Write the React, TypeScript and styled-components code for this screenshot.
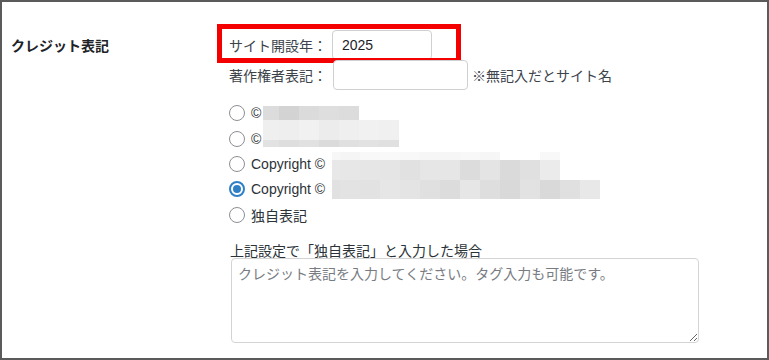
import styled, { createGlobalStyle } from 'styled-components'

const GlobalStyle = createGlobalStyle`
  html, body {
    margin: 0;
    padding: 0;
    background: #fff;
  }
  body {
    font-family: 'Liberation Sans', 'Noto Sans CJK JP', sans-serif;
    font-size: 14px;
    color: #2c3338;
  }
`

type Cell = { w: number; c: string }
type Band = { h: number; cells: Cell[] }

const mosaics: Record<string, Band[]> = {
  short: [
    {
      h: 15,
      cells: [
        { w: 16, c: '#dcdcdc' },
        { w: 20, c: '#d3d3d3' },
        { w: 20, c: '#dbdbdb' },
        { w: 20, c: '#dedede' },
        { w: 20, c: '#dcdcdc' },
      ],
    },
  ],
  medium: [
    {
      h: 20,
      cells: [
        { w: 16, c: '#efefef' },
        { w: 20, c: '#eeeeee' },
        { w: 20, c: '#f1f1f1' },
        { w: 20, c: '#ececec' },
        { w: 20, c: '#efefef' },
        { w: 20, c: '#f1f1f1' },
        { w: 20, c: '#f0f0f0' },
      ],
    },
    {
      h: 7,
      cells: [
        { w: 16, c: '#e2e2e2' },
        { w: 20, c: '#dedede' },
        { w: 20, c: '#e1e1e1' },
        { w: 20, c: '#dbdbdb' },
        { w: 20, c: '#e0e0e0' },
        { w: 20, c: '#e2e2e2' },
        { w: 20, c: '#e0e0e0' },
      ],
    },
  ],
  long: [
    {
      h: 8,
      cells: [
        { w: 8, c: '#f7f7f7' },
        { w: 20, c: '#f5f5f5' },
        { w: 20, c: '#f8f8f8' },
        { w: 20, c: '#f9f9f9' },
        { w: 20, c: '#f8f8f8' },
        { w: 20, c: '#f6f6f6' },
        { w: 20, c: '#f6f6f6' },
        { w: 20, c: '#f8f8f8' },
        { w: 20, c: '#f6f6f6' },
        { w: 20, c: '#ffffff' },
        { w: 20, c: '#ffffff' },
        { w: 20, c: '#f8f8f8' },
      ],
    },
    {
      h: 20,
      cells: [
        { w: 8, c: '#e8e8e8' },
        { w: 20, c: '#e7e7e7' },
        { w: 20, c: '#e6e6e6' },
        { w: 20, c: '#e5e5e5' },
        { w: 20, c: '#e1e1e1' },
        { w: 20, c: '#e6e6e6' },
        { w: 20, c: '#e6e6e6' },
        { w: 20, c: '#dcdcdc' },
        { w: 20, c: '#e4e4e4' },
        { w: 20, c: '#dadada' },
        { w: 20, c: '#e0e0e0' },
        { w: 20, c: '#ebebeb' },
      ],
    },
  ],
  longest: [
    {
      h: 19,
      cells: [
        { w: 8, c: '#e1e1e1' },
        { w: 20, c: '#e3e3e3' },
        { w: 20, c: '#e2e2e2' },
        { w: 20, c: '#e6e6e6' },
        { w: 20, c: '#e4e4e4' },
        { w: 20, c: '#e0e0e0' },
        { w: 20, c: '#dcdcdc' },
        { w: 20, c: '#e6e6e6' },
        { w: 20, c: '#dedede' },
        { w: 20, c: '#d9d9d9' },
        { w: 20, c: '#e2e2e2' },
        { w: 20, c: '#d9d9d9' },
        { w: 20, c: '#e0e0e0' },
        { w: 20, c: '#e8e8e8' },
      ],
    },
  ],
}

const Frame = styled.div`
  box-sizing: border-box;
  width: 769px;
  height: 360px;
  border: 2px solid #5b5b5b;
  display: grid;
  grid-template-columns: 227px 1fr;
  padding-top: 28px;
  overflow: hidden;
`

const Th = styled.div`
  padding-left: 9px;
  font-weight: 700;
  line-height: 30px;
  color: #1d2327;
  font-family: 'Noto Sans CJK JP', sans-serif;
`

const Td = styled.div`
  display: flex;
  flex-direction: column;
`

const FieldRow = styled.div`
  position: relative;
  display: flex;
  align-items: center;
  height: 30px;
`

const FieldLabel = styled.span`
  font-family: 'Noto Sans CJK JP', sans-serif;
  color: #3c434a;
  width: 98px;
`

const TextInput = styled.input<{ $w: number; $gap: number }>`
  box-sizing: border-box;
  width: ${({ $w }) => $w}px;
  height: 30px;
  margin: 0 0 0 ${({ $gap }) => $gap}px;
  padding: 0 9px;
  border: 1px solid #d0d0d0;
  border-radius: 4px;
  font-family: 'Liberation Sans', sans-serif;
  font-size: 14px;
  color: #1d2327;
  background: #fff;
  outline: none;
`

const Note = styled.span`
  margin-left: 4px;
  font-family: 'Noto Sans CJK JP', sans-serif;
  color: #3c434a;
`

const Highlight = styled.div`
  position: absolute;
  left: -12px;
  top: -6px;
  width: 244px;
  height: 39px;
  box-sizing: border-box;
  border: 5px solid #f40000;
  pointer-events: none;
`

const RadioList = styled.div`
  margin-top: 10px;
  display: flex;
  flex-direction: column;
`

const RadioRow = styled.label<{ $h: number }>`
  display: flex;
  align-items: center;
  height: ${({ $h }) => $h}px;
  color: #2c3338;
`

const RadioDot = styled.span<{ $checked?: boolean }>`
  box-sizing: border-box;
  width: 16px;
  height: 16px;
  border-radius: 50%;
  border: ${({ $checked }) => ($checked ? '2px solid #2f7fc6' : '1px solid #8c8f94')};
  margin-right: 6px;
  display: flex;
  align-items: center;
  justify-content: center;
  background: #fff;
  flex-shrink: 0;

  &::after {
    content: '';
    display: ${({ $checked }) => ($checked ? 'block' : 'none')};
    width: 8px;
    height: 8px;
    border-radius: 50%;
    background: #2f7fc6;
  }
`

const RadioText = styled.span<{ $jp?: boolean }>`
  font-family: ${({ $jp }) =>
    $jp ? "'Noto Sans CJK JP', sans-serif" : "'Liberation Sans', 'Noto Sans CJK JP', sans-serif"};
  white-space: pre;
`

const MosaicSvg = styled.svg<{ $gap: number; $shift: number }>`
  display: block;
  flex-shrink: 0;
  margin-left: ${({ $gap }) => $gap}px;
  margin-top: ${({ $shift }) => Math.max(0, $shift * 2)}px;
  margin-bottom: ${({ $shift }) => Math.max(0, -$shift * 2)}px;
`

const Caption = styled.div`
  margin-top: 14px;
  height: 16px;
  line-height: 16px;
  padding-left: 1px;
  font-family: 'Noto Sans CJK JP', sans-serif;
  color: #2c3338;
`

const TextArea = styled.textarea`
  box-sizing: border-box;
  width: 468px;
  height: 85px;
  margin: 0 0 0 2px;
  padding: 5px 6px;
  border: 1px solid #d4d4d4;
  border-radius: 4px;
  font-family: 'Noto Sans CJK JP', sans-serif;
  font-size: 14px;
  line-height: 18px;
  color: #2c3338;
  resize: vertical;
  outline: none;

  &::placeholder {
    color: #787c82;
  }
`

function Mosaic({ kind, gap, shift = 0 }: { kind: string; gap: number; shift?: number }) {
  const bands = mosaics[kind]
  const width = bands[0].cells.reduce((s, c) => s + c.w, 0)
  const height = bands.reduce((s, b) => s + b.h, 0)
  let y = 0
  return (
    <MosaicSvg width={width} height={height} viewBox={`0 0 ${width} ${height}`} $gap={gap} $shift={shift}>
      {bands.map((band, bi) => {
        let x = 0
        const top = y
        y += band.h
        return band.cells.map((cell, ci) => {
          const rect = <rect key={`${bi}-${ci}`} x={x} y={top} width={cell.w} height={band.h} fill={cell.c} />
          x += cell.w
          return rect
        })
      })}
    </MosaicSvg>
  )
}

const options = [
  { text: '©', mosaic: 'short', gap: 2, shift: 0, h: 26 },
  { text: '©', mosaic: 'medium', gap: 2, shift: -5.5, h: 26 },
  { text: 'Copyright ©', mosaic: 'long', gap: 7, shift: 2, h: 24 },
  { text: 'Copyright ©', mosaic: 'longest', gap: 7, shift: 0, h: 26, checked: true },
  { text: '独自表記', h: 26, jp: true },
]

export default function App() {
  return (
    <>
      <GlobalStyle />
      <Frame>
        <Th>クレジット表記</Th>
        <Td>
          <FieldRow>
            <FieldLabel>サイト開設年：</FieldLabel>
            <TextInput $w={100} $gap={5} defaultValue="2025" />
            <Highlight />
          </FieldRow>
          <FieldRow>
            <FieldLabel>著作権者表記：</FieldLabel>
            <TextInput $w={135} $gap={6} />
            <Note>※無記入だとサイト名</Note>
          </FieldRow>
          <RadioList>
            {options.map((o, i) => (
              <RadioRow key={i} $h={o.h}>
                <RadioDot $checked={o.checked} />
                <RadioText $jp={o.jp}>{o.text}</RadioText>
                {o.mosaic && <Mosaic kind={o.mosaic} gap={o.gap ?? 0} shift={o.shift} />}
              </RadioRow>
            ))}
          </RadioList>
          <Caption>上記設定で「独自表記」と入力した場合</Caption>
          <TextArea placeholder="クレジット表記を入力してください。タグ入力も可能です。" />
        </Td>
      </Frame>
    </>
  )
}
